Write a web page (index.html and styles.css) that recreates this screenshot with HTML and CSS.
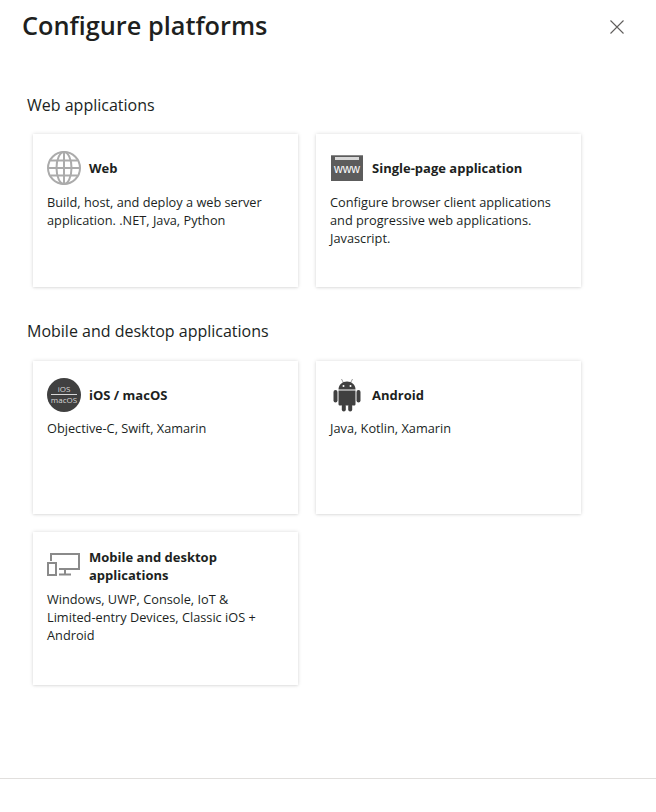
FILE: index.html
```html
<!DOCTYPE html>
<html lang="en">

<head>
    <meta charset="UTF-8">
    <meta name="viewport" content="width=device-width, initial-scale=1.0">
    <title>Configure platforms</title>

    <link rel="stylesheet" href="styles.css">
</head>

<body>

    <div class="panel">
        <!-- Header -->
        <div class="panel-header">
            <h1>Configure platforms</h1>
            <button class="close-btn" aria-label="Close">
                <svg width="14" height="14" viewBox="0 0 14 14">
                    <path d="M0.5 0.5 L13.5 13.5 M13.5 0.5 L0.5 13.5" stroke="#605e5c" stroke-width="1.1" fill="none" />
                </svg>
            </button>
        </div>

        <!-- Web applications -->
        <h2>Web applications</h2>
        <div class="card-grid">
            <div class="card">
                <div class="card-title">
                    <svg class="card-icon" width="34" height="34" viewBox="0 0 34 34" fill="none" stroke="#ababab" stroke-width="2">
                        <circle cx="17" cy="17" r="16" />
                        <ellipse cx="17" cy="17" rx="7.5" ry="16" />
                        <path d="M17 1 V33 M1 17 H33 M3.5 9.5 H30.5 M3.5 24.5 H30.5" />
                    </svg>
                    <h3>Web</h3>
                </div>
                <p>Build, host, and deploy a web server application. .NET, Java, Python</p>
            </div>

            <div class="card">
                <div class="card-title">
                    <div class="www-icon">
                        <span class="www-bar"></span>
                        <span class="www-text">www</span>
                    </div>
                    <h3>Single-page application</h3>
                </div>
                <p>Configure browser client applications and progressive web applications. Javascript.</p>
            </div>
        </div>

        <!-- Mobile and desktop applications -->
        <h2>Mobile and desktop applications</h2>
        <div class="card-grid">
            <div class="card">
                <div class="card-title">
                    <div class="ios-icon">
                        <span class="ios-top">iOS</span>
                        <span class="ios-bottom">macOS</span>
                    </div>
                    <h3>iOS / macOS</h3>
                </div>
                <p>Objective-C, Swift, Xamarin</p>
            </div>

            <div class="card">
                <div class="card-title">
                    <svg class="card-icon" width="34" height="34" viewBox="0 0 34 34" fill="#404040">
                        <path d="M11.500 1 L13.500 5 M22.500 1 L20.500 5" stroke="#808080" stroke-width="0.8" fill="none" />
                        <path d="M8.500 11.500 C8.500 6.500 12.500 3.500 17 3.500 C21.500 3.500 25.500 6.500 25.500 11.500 Z" />
                        <path d="M8.500 12.500 H25.500 V26 C25.500 27 24.800 27.500 24 27.500 H10 C9.200 27.500 8.500 27 8.500 26 Z" />
                        <rect x="3.500" y="12" width="4" height="12.500" rx="2" />
                        <rect x="26.500" y="12" width="4" height="12.500" rx="2" />
                        <rect x="11.800" y="26" width="4" height="7.500" rx="2" />
                        <rect x="18.200" y="26" width="4" height="7.500" rx="2" />
                        <circle cx="13.500" cy="8" r="1" fill="#fff" />
                        <circle cx="20.500" cy="8" r="1" fill="#fff" />
                    </svg>
                    <h3>Android</h3>
                </div>
                <p>Java, Kotlin, Xamarin</p>
            </div>

            <div class="card">
                <div class="card-title">
                    <svg class="card-icon" width="34" height="34" viewBox="0 0 34 34" fill="none" stroke="#8a8a8a" stroke-width="2">
                        <path d="M4 12 V5 H32 V20 H12" />
                        <rect x="1" y="14" width="8" height="12" fill="#fff" />
                        <path d="M18 20 V25 M12 25.500 H24" />
                    </svg>
                    <h3>Mobile and desktop applications</h3>
                </div>
                <p>Windows, UWP, Console, IoT &amp;<br>Limited-entry Devices, Classic iOS + Android</p>
            </div>
        </div>

        <div class="panel-footer"></div>
    </div>

</body>

</html>
```

FILE: styles.css
```css
/* General Styling */
body {
    font-family: 'Open Sans', 'Noto Sans', sans-serif;
    background-color: #ffffff;
    margin: 0;
    padding: 0;
    color: #201f1e;
}

.panel {
    height: 812px;
    box-sizing: border-box;
    padding: 0 22px;
}

/* Header */
.panel-header {
    display: flex;
    justify-content: space-between;
    align-items: flex-start;
    height: 81.5px;
}

h1 {
    font-size: 25.3px;
    font-weight: 600;
    line-height: 32px;
    margin: 9px 0 0;
    color: #201f1e;
}

.close-btn {
    background: none;
    border: none;
    padding: 0;
    margin: 20px 10px 0 0;
    line-height: 0;
    cursor: pointer;
}

/* Section Headings */
h2 {
    font-size: 16px;
    font-weight: 400;
    line-height: 24px;
    margin: 11px 0 17.5px 5px;
    color: #201f1e;
}

/* Cards */
.card-grid {
    display: grid;
    grid-template-columns: 265px 265px;
    gap: 18px;
    margin-left: 11px;
    margin-bottom: 32px;
}

.card {
    box-sizing: border-box;
    height: 153px;
    padding: 16px 14px 0;
    background-color: #ffffff;
    box-shadow: 0 0 4px rgba(0, 0, 0, 0.14), 0 1px 2px rgba(0, 0, 0, 0.06);
}

.card-title {
    display: flex;
    align-items: center;
    gap: 8px;
    min-height: 36px;
}

.card-icon {
    flex-shrink: 0;
}

h3 {
    font-size: 13px;
    font-weight: 700;
    line-height: 18px;
    margin: 0;
}

.card p {
    font-size: 12.75px;
    line-height: 18px;
    margin: 6.6px 0 0;
}

/* WWW Icon */
.www-icon {
    flex-shrink: 0;
    width: 32px;
    height: 26px;
    margin: 0 1px;
    background-color: #5c5c5c;
    border-top: 1px solid #8a8a8a;
    box-sizing: border-box;
    display: flex;
    flex-direction: column;
    align-items: center;
}

.www-bar {
    width: 24px;
    height: 3px;
    margin-top: 1px;
    background-color: #d8d8d8;
}

.www-text {
    color: #ffffff;
    font-family: 'Liberation Sans', sans-serif;
    font-size: 12px;
    line-height: 12px;
    margin-top: 3px;
}

/* iOS Icon */
.ios-icon {
    flex-shrink: 0;
    width: 34px;
    height: 34px;
    border-radius: 50%;
    background-color: #404040;
    color: #d8d8d8;
    font-size: 8px;
    line-height: 10px;
    text-align: center;
    display: flex;
    flex-direction: column;
    justify-content: center;
    align-items: center;
}

.ios-top {
    border-bottom: 1px solid #d8d8d8;
    width: 26px;
}

/* Footer */
.panel-footer {
    border-top: 1px solid #e1dfdd;
    margin: 93.5px -22px 0;
}
```
